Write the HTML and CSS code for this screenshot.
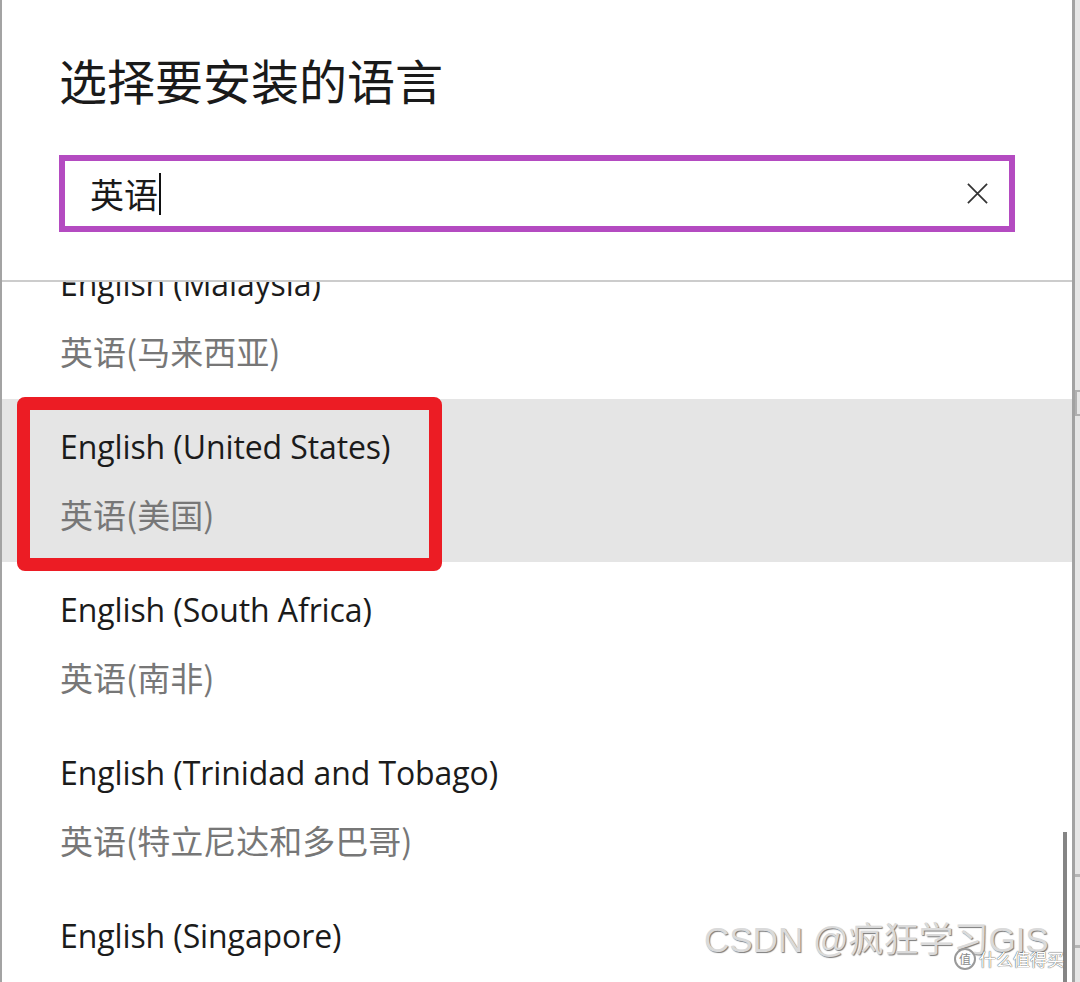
FILE: index.html
```html
<!DOCTYPE html>
<html lang="zh-CN">
<head>
<meta charset="utf-8">
<title>选择要安装的语言</title>
<link rel="stylesheet" href="styles.css">
</head>
<body>
<div class="window">
  <div class="dialog">
    <h1 class="title">选择要安装的语言</h1>
    <div class="search">
      <span class="search-text">英语</span><span class="caret"></span>
      <svg class="clear" width="24" height="24" viewBox="0 0 24 24" aria-hidden="true">
        <path d="M2 2 L22 22 M22 2 L2 22" stroke="#333" stroke-width="1.8" fill="none"/>
      </svg>
    </div>
    <div class="divider"></div>
    <div class="list">
      <div class="list-inner">
        <div class="item">
          <div class="name">English (Malaysia)</div>
          <div class="native">英语(马来西亚)</div>
        </div>
        <div class="item selected">
          <div class="name">English (United States)</div>
          <div class="native">英语(美国)</div>
          <div class="mark"></div>
        </div>
        <div class="item">
          <div class="name">English (South Africa)</div>
          <div class="native">英语(南非)</div>
        </div>
        <div class="item">
          <div class="name">English (Trinidad and Tobago)</div>
          <div class="native">英语(特立尼达和多巴哥)</div>
        </div>
        <div class="item">
          <div class="name">English (Singapore)</div>
        </div>
      </div>
      <div class="thumb"></div>
      <div class="watermark">CSDN @疯狂学习GIS</div>
      <div class="badge"><span class="badge-circle">值</span><span class="badge-text">什么值得买</span></div>
    </div>
  </div>
  <div class="edge">
    <div class="tick tick-a"></div>
    <div class="tick tick-b"></div>
    <div class="tick tick-c"></div>
  </div>
</div>
</body>
</html>
```

FILE: styles.css
```css
html, body {
  margin: 0;
  padding: 0;
  background: #ffffff;
}

body {
  font-family: "Open Sans", "Noto Sans CJK SC", sans-serif;
  color: #1b1b1b;
}

.window {
  display: flex;
  width: 1080px;
  height: 982px;
  overflow: hidden;
}

.dialog {
  width: 1070px;
  border-left: 2px solid #a3a3a3;
  display: flex;
  flex-direction: column;
  background: #ffffff;
}

.title {
  margin: 50px 0 0 57px;
  font-family: "Noto Sans CJK SC", sans-serif;
  font-weight: 400;
  font-size: 48px;
  line-height: 58px;
  color: #1a1a1a;
  letter-spacing: 0;
}

.search {
  margin: 47px 0 0 57px;
  width: 956px;
  height: 77px;
  box-sizing: border-box;
  border: 6px solid #b44bc1;
  display: flex;
  align-items: center;
  padding-left: 25px;
  padding-right: 20px;
}

.search-text {
  font-family: "Noto Sans CJK SC", sans-serif;
  font-size: 34px;
  line-height: 40px;
  color: #1a1a1a;
}

.caret {
  width: 2px;
  height: 42px;
  background: #111;
  margin-left: 1px;
}

.clear {
  margin-left: auto;
  width: 23px;
  height: 23px;
}

.divider {
  margin-top: 48px;
  height: 2px;
  background: #cccccc;
}

.list {
  position: relative;
  flex: 1;
  overflow: hidden;
}

.list-inner {
  margin-top: -46px;
}

.item {
  position: relative;
  height: 163px;
  box-sizing: border-box;
  padding: 26px 0 0 58px;
}

.item.selected {
  background: #e5e5e5;
}

.name {
  font-family: "Open Sans", sans-serif;
  font-size: 32px;
  line-height: 44px;
  color: #1b1b1b;
  letter-spacing: -0.1px;
}

.native {
  margin-top: 25px;
  font-family: "Noto Sans CJK SC", sans-serif;
  font-size: 33px;
  line-height: 40px;
  color: #777777;
}

.mark {
  position: absolute;
  left: 15px;
  top: -2px;
  width: 425px;
  height: 174px;
  box-sizing: border-box;
  border: 13px solid #ec1c24;
  border-radius: 8px;
}

.thumb {
  position: absolute;
  right: 5px;
  bottom: 0;
  width: 4px;
  height: 150px;
  background: #858585;
}

.watermark {
  position: absolute;
  left: 702px;
  top: 636px;
  font-family: "Liberation Sans", "Noto Sans CJK SC", sans-serif;
  font-size: 35px;
  line-height: 44px;
  color: #dadada;
  text-shadow: 1px 1px 1px #7a7a7a;
  white-space: nowrap;
}

.badge {
  position: absolute;
  left: 952px;
  top: 666px;
  display: flex;
  align-items: center;
  gap: 3px;
  font-family: "Noto Sans CJK SC", sans-serif;
  white-space: nowrap;
}

.badge-circle {
  width: 22px;
  height: 22px;
  box-sizing: border-box;
  border-radius: 50%;
  border: 2px solid #9a9a9a;
  background: #ffffff;
  font-size: 12px;
  line-height: 18px;
  text-align: center;
  color: #8a8a8a;
}

.badge-text {
  font-size: 17px;
  line-height: 22px;
  color: #ffffff;
  text-shadow: 0 0 1px #555, 0 0 1px #555;
}

.edge {
  position: relative;
  width: 8px;
  border-left: 3px solid #a2a2a2;
  background: #e6e6e6;
  box-sizing: border-box;
}

.tick {
  position: absolute;
  left: 0;
  width: 5px;
  background: #b5b5b5;
}

.tick-a {
  top: 390px;
  height: 26px;
  background: transparent;
  border: 2px solid #b0b0b0;
  border-right: none;
  box-sizing: border-box;
}

.tick-b {
  top: 874px;
  height: 3px;
}

.tick-c {
  top: 945px;
  height: 3px;
}
```
